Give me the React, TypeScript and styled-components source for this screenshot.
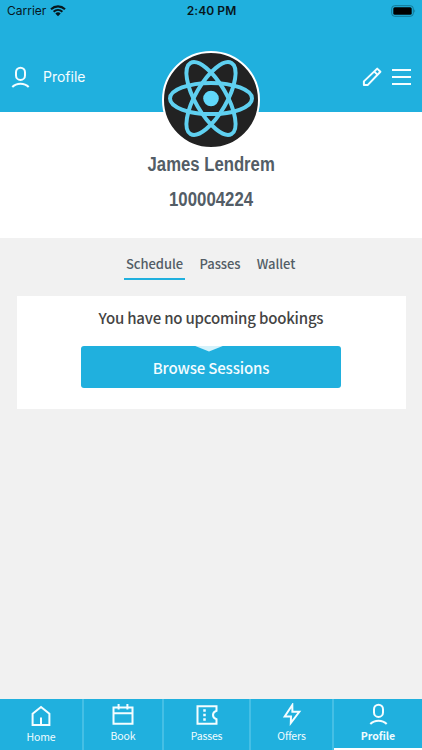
import React from 'react';
import styled, { createGlobalStyle } from 'styled-components';

const blue = '#20b0de';
const slate = '#535d66';

const Global = createGlobalStyle`
  * { box-sizing: border-box; }
  body { margin: 0; background: #f1f1f1; }
  button { font: inherit; border: 0; background: none; padding: 0; margin: 0; }
  svg { display: block; flex: none; }
`;

const Screen = styled.div`
  width: 422px;
  height: 750px;
  overflow: hidden;
  display: flex;
  flex-direction: column;
  background: #f1f1f1;
  font-family: 'Noto Sans CJK SC', 'Noto Sans', sans-serif;
`;

const Header = styled.header`
  height: 112px;
  flex: none;
  background: ${blue};
`;

const StatusBar = styled.div`
  height: 22px;
  display: grid;
  grid-template-columns: 1fr auto 1fr;
  align-items: center;
  padding: 0 6px 0 7px;
  font: 400 12px/22px Inter, sans-serif;
  color: #07171d;
`;

const Carrier = styled.div`
  display: flex;
  align-items: center;
  gap: 4px;
`;

const Clock = styled.div`
  font-weight: 600;
  letter-spacing: 0.1px;
`;

const BatterySlot = styled.div`
  justify-self: end;
  padding-bottom: 1px;
`;

const TitleBar = styled.div`
  height: 38px;
  margin-top: 36px;
  padding: 0 11px;
  display: flex;
  align-items: flex-start;
  justify-content: space-between;
`;

const Title = styled.h1`
  display: flex;
  align-items: center;
  gap: 13px;
  margin: 0;
  height: 38px;
  font: 400 14px/38px Inter, sans-serif;
  color: #f4fdff;
`;

const Actions = styled.div`
  height: 38px;
  display: flex;
  align-items: center;
  gap: 10px;
`;

const Identity = styled.section`
  height: 125.5px;
  flex: none;
  display: flex;
  flex-direction: column;
  align-items: center;
  background: #fff;
`;

const Avatar = styled.div`
  position: relative;
  width: 98px;
  height: 98px;
  margin-top: -61px;
  border: 2px solid #fff;
  border-radius: 50%;
  overflow: hidden;
  background: #222;
`;

const NarrowLine = styled.div<{ $scale: number; $top: number }>`
  margin-top: ${(p) => p.$top}px;
  font: 700 20px/24px 'Liberation Sans', Arial, sans-serif;
  color: ${slate};
  white-space: nowrap;
  transform: scaleX(${(p) => p.$scale});
`;

const Tabs = styled.nav`
  display: flex;
  height: 58.5px;
  flex: none;
  align-items: flex-start;
  padding: 14.5px 0 0 124px;
  gap: 10px;
`;

const Tab = styled.button<{ $active?: boolean; $width: number }>`
  width: ${(p) => p.$width}px;
  height: 28px;
  padding-bottom: 3px;
  text-align: center;
  white-space: nowrap;
  font-size: 13px;
  line-height: 23px;
  font-weight: 500;
  letter-spacing: -0.05px;
  color: ${slate};
  border-bottom: 2px solid ${(p) => (p.$active ? blue : 'transparent')};
`;

const Card = styled.section`
  height: 112.5px;
  flex: none;
  margin: 0 16.5px;
  display: flex;
  flex-direction: column;
  align-items: center;
  background: #fff;
`;

const Message = styled.p`
  margin: 9px 0 0;
  height: 40.5px;
  font-size: 15px;
  line-height: 25px;
  font-weight: 500;
  letter-spacing: -0.2px;
  color: #444;
`;

const Browse = styled.button`
  position: relative;
  width: 260px;
  height: 42.5px;
  border-radius: 3px;
  background: ${blue};
  color: #f3fcff;
  font-size: 15px;
  line-height: 43px;
  font-weight: 500;
  letter-spacing: -0.15px;
`;

const Notch = styled.span`
  position: absolute;
  left: 113px;
  top: 0;
  width: 30px;
  height: 6px;
  background: #d5f2fb;
  clip-path: polygon(0 0, 100% 0, 50% 100%);
`;

const BottomNav = styled.nav`
  margin-top: auto;
  height: 51.5px;
  flex: none;
  display: grid;
  grid-template-columns: 84px 80px 87px 83px 88px;
  background: ${blue};
`;

const NavItem = styled.button<{ $active?: boolean; $drop?: number }>`
  display: flex;
  flex-direction: column;
  align-items: center;
  justify-content: flex-start;
  padding-top: ${(p) => 5 + (p.$drop ?? 0)}px;
  border-right: ${(p) => (p.$active ? '0' : '2px solid #45bfe5')};
  border-bottom: ${(p) => (p.$active ? '2px solid #fff' : '0')};
  font-size: 10.5px;
  line-height: 20px;
  font-weight: ${(p) => (p.$active ? 700 : 400)};
  letter-spacing: ${(p) => (p.$active ? 0 : -0.15)}px;
  color: #f0fcff;
`;

const IconBox = styled.span`
  height: 22px;
  display: flex;
  align-items: center;
`;

const iconProps = { fill: 'none', stroke: '#f4fdff', strokeWidth: 2 };

const PersonIcon = () => (
  <svg width="19" height="23" viewBox="0 0 19 23" {...iconProps}>
    <rect x="5" y="1.7" width="9" height="12.2" rx="4.5" />
    <path d="M1.3 21 C5.5 16.5 13.5 16.5 17.7 21" />
  </svg>
);

const WifiIcon = () => (
  <svg width="16" height="12" viewBox="0 0 16 12" fill="none" stroke="#07171d">
    <path d="M1 4.2 C5 .4 11 .4 15 4.2" strokeWidth="2.1" />
    <path d="M3.6 6.8 C6.2 4.4 9.8 4.4 12.4 6.8" strokeWidth="2" />
    <path d="M5.3 8.5 Q8 6.2 10.7 8.5 L8 11.3Z" fill="#07171d" stroke="none" />
  </svg>
);

const BatteryIcon = () => (
  <svg width="25" height="12" viewBox="0 0 25 12">
    <rect x=".7" y=".7" width="21.6" height="10.6" rx="3" fill="none" stroke="#137794" />
    <rect x="2.3" y="2.3" width="18.4" height="7.4" rx="1.5" fill="#000" />
    <path d="M23.4 4.2 Q25 6 23.4 7.8Z" fill="#137794" />
  </svg>
);

const PencilIcon = () => (
  <svg width="20" height="20" viewBox="0 0 20 20" {...iconProps}>
    <path d="M1.9 18.1 V14.4 L15.2 1.6 L18.4 4.8 L5.6 18.1Z" strokeLinejoin="round" />
    <path d="M12.2 4.5 L15.6 7.9" strokeWidth="1.8" />
  </svg>
);

const MenuIcon = () => (
  <svg width="19" height="18" viewBox="0 0 19 18" {...iconProps}>
    <path d="M0 2 H19 M0 9 H19 M0 16 H19" />
  </svg>
);

const HomeIcon = () => (
  <svg width="22" height="22" viewBox="0 0 22 22" {...iconProps}>
    <path d="M2.6 8.7 L11 2 L19.4 8.7 V20 H2.6Z M11 20 V12.6" />
  </svg>
);

const CalendarIcon = () => (
  <svg width="22" height="22" viewBox="0 0 22 22" {...iconProps}>
    <path d="M1.5 3.6 H20.5 V19.8 H1.5Z M1.5 9.2 H20.5 M6.6 -.3 V5.5 M15.4 -.3 V5.5" />
  </svg>
);

const TicketIcon = () => (
  <svg width="22" height="22" viewBox="0 0 22 22" {...iconProps}>
    <path d="M1.5 2.3 H20.5 V6.7 Q17 8 17 11 Q17 14 20.5 15.3 V19.7 H1.5Z" />
    <path d="M8.5 5.2 V7.8 M8.5 9.7 V12.3 M8.5 14.2 V16.8" strokeWidth="2.5" />
  </svg>
);

const BoltIcon = () => (
  <svg width="20" height="23" viewBox="0 0 20 23" {...iconProps}>
    <path d="M10.3 2 L2.7 13.5 H9 L8.8 20 L17.3 8.8 H10.4Z" />
  </svg>
);

const Atom = () => (
  <svg width="94" height="94" viewBox="0 0 94 94" fill="none" stroke="#5fd0f0" strokeWidth="4">
    {[0, 60, 120].map((angle) => (
      <ellipse key={angle} cx="47" cy="45.5" rx="41" ry="15.6" transform={`rotate(${angle} 47 45.5)`} />
    ))}
    <circle cx="47" cy="45.5" r="7.8" fill="#61d8fa" stroke="none" />
  </svg>
);

const navItems = [
  { label: 'Home', Icon: HomeIcon, drop: 1 },
  { label: 'Book', Icon: CalendarIcon },
  { label: 'Passes', Icon: TicketIcon },
  { label: 'Offers', Icon: BoltIcon },
  { label: 'Profile', Icon: PersonIcon, active: true },
];

export default function App() {
  return (
    <Screen>
      <Global />
      <Header>
        <StatusBar>
          <Carrier>Carrier <WifiIcon /></Carrier>
          <Clock>2:40 PM</Clock>
          <BatterySlot><BatteryIcon /></BatterySlot>
        </StatusBar>
        <TitleBar>
          <Title><PersonIcon />Profile</Title>
          <Actions><PencilIcon /><MenuIcon /></Actions>
        </TitleBar>
      </Header>
      <Identity>
        <Avatar><Atom /></Avatar>
        <NarrowLine $scale={0.835} $top={3}>James Lendrem</NarrowLine>
        <NarrowLine $scale={0.84} $top={11}>100004224</NarrowLine>
      </Identity>
      <Tabs>
        <Tab $active $width={61}>Schedule</Tab>
        <Tab $width={50}>Passes</Tab>
        <Tab $width={42}>Wallet</Tab>
      </Tabs>
      <Card>
        <Message>You have no upcoming bookings</Message>
        <Browse><Notch />Browse Sessions</Browse>
      </Card>
      <BottomNav>
        {navItems.map(({ label, Icon, active, drop }) => (
          <NavItem key={label} $active={active} $drop={drop}>
            <IconBox><Icon /></IconBox>
            {label}
          </NavItem>
        ))}
      </BottomNav>
    </Screen>
  );
}
